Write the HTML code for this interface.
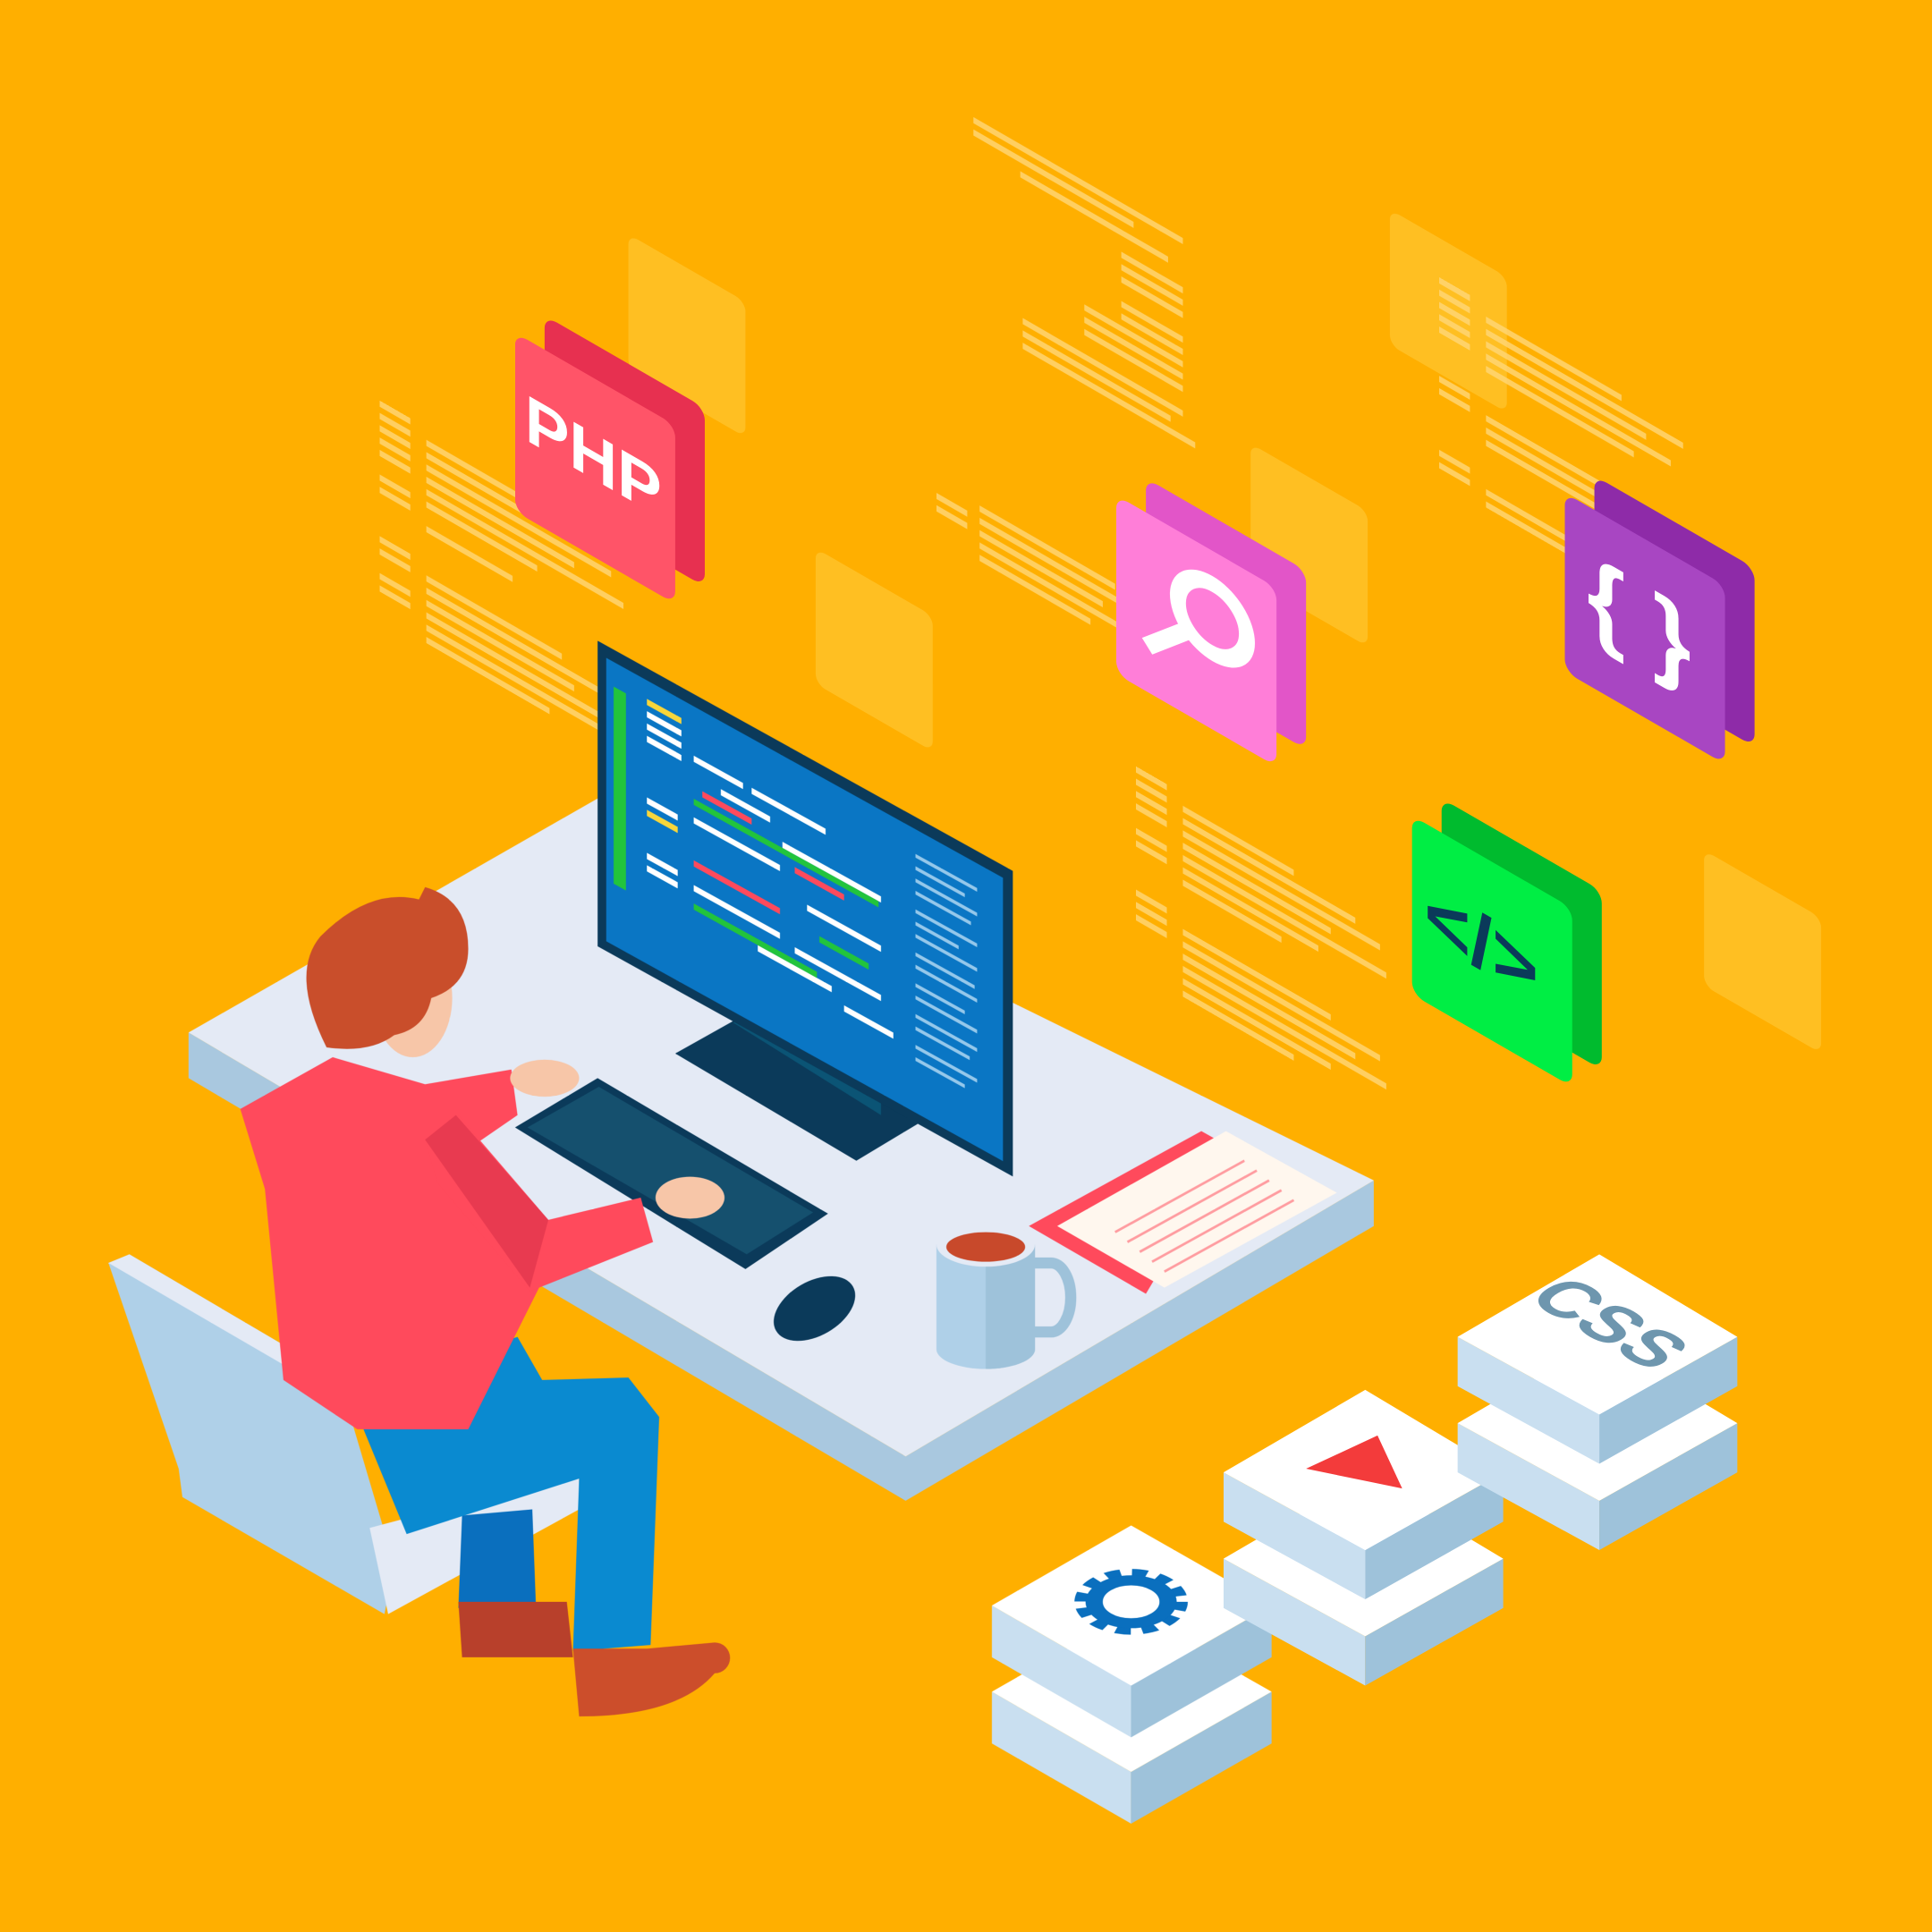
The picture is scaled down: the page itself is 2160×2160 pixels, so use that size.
<!DOCTYPE html>
<html><head><meta charset="utf-8"><style>
html,body{margin:0;padding:0;background:#FFAF00;}
svg{display:block;}
text{font-family:"Liberation Sans",sans-serif;font-weight:bold;}
</style></head><body>
<svg width="2160" height="2160" viewBox="0 0 1568 1568" xmlns="http://www.w3.org/2000/svg">
<rect width="1568" height="1568" fill="#FFAF00"/>

<g fill="#FFC42E" opacity="0.75">
<g transform="translate(510,190) skewY(30)"><rect width="95" height="110" rx="8"/></g>
<g transform="translate(662,445) skewY(30)"><rect width="95" height="110" rx="8"/></g>
<g transform="translate(1015,360) skewY(30)"><rect width="95" height="110" rx="8"/></g>
<g transform="translate(1128,170) skewY(30)"><rect width="95" height="110" rx="8"/></g>
<g transform="translate(1383,690) skewY(30)"><rect width="95" height="110" rx="8"/></g>
</g>

<g fill="#FFD77A" opacity="0.8">
<g transform="translate(308,325) skewY(30)">
<rect y="0" width="25" height="5"/><rect y="10" width="25" height="5"/><rect y="20" width="25" height="5"/><rect y="30" width="25" height="5"/><rect y="40" width="25" height="5"/><rect y="60" width="25" height="5"/><rect y="70" width="25" height="5"/><rect y="110" width="25" height="5"/><rect y="120" width="25" height="5"/><rect y="140" width="25" height="5"/><rect y="150" width="25" height="5"/>
<rect x="38" y="10" width="90" height="5"/><rect x="38" y="20" width="130" height="5"/><rect x="38" y="30" width="150" height="5"/><rect x="38" y="40" width="120" height="5"/><rect x="38" y="50" width="160" height="5"/><rect x="38" y="60" width="90" height="5"/><rect x="38" y="80" width="70" height="5"/><rect x="38" y="120" width="110" height="5"/><rect x="38" y="130" width="150" height="5"/><rect x="38" y="140" width="120" height="5"/><rect x="38" y="150" width="170" height="5"/><rect x="38" y="160" width="140" height="5"/><rect x="38" y="170" width="100" height="5"/>
</g>
<g transform="translate(790,95) skewY(30)">
<rect width="170" height="5"/><rect y="10" width="130" height="5"/><rect x="38" y="22" width="120" height="5"/><rect x="120" y="40" width="50" height="5"/><rect x="120" y="50" width="50" height="5"/><rect x="120" y="60" width="50" height="5"/><rect x="120" y="80" width="50" height="5"/><rect x="120" y="90" width="50" height="5"/><rect x="90" y="100" width="80" height="5"/><rect x="90" y="110" width="80" height="5"/><rect x="90" y="120" width="80" height="5"/><rect x="40" y="140" width="130" height="5"/><rect x="40" y="150" width="120" height="5"/><rect x="40" y="160" width="140" height="5"/>
</g>
<g transform="translate(760,370) skewY(30)">
<rect y="30" width="25" height="5"/><rect y="40" width="25" height="5"/><rect x="35" y="20" width="110" height="5"/><rect x="35" y="30" width="130" height="5"/><rect x="35" y="40" width="100" height="5"/><rect x="35" y="50" width="120" height="5"/><rect x="35" y="60" width="90" height="5"/>
</g>
<g transform="translate(922,622) skewY(30)">
<rect y="0" width="25" height="5"/><rect y="10" width="25" height="5"/><rect y="20" width="25" height="5"/><rect y="30" width="25" height="5"/><rect y="50" width="25" height="5"/><rect y="60" width="25" height="5"/><rect y="100" width="25" height="5"/><rect y="110" width="25" height="5"/><rect y="120" width="25" height="5"/>
<rect x="38" y="10" width="90" height="5"/><rect x="38" y="20" width="140" height="5"/><rect x="38" y="30" width="160" height="5"/><rect x="38" y="40" width="120" height="5"/><rect x="38" y="50" width="165" height="5"/><rect x="38" y="60" width="110" height="5"/><rect x="38" y="70" width="80" height="5"/><rect x="38" y="110" width="120" height="5"/><rect x="38" y="120" width="160" height="5"/><rect x="38" y="130" width="140" height="5"/><rect x="38" y="140" width="165" height="5"/><rect x="38" y="150" width="120" height="5"/><rect x="38" y="160" width="90" height="5"/>
</g>
<g transform="translate(1168,225) skewY(30)">
<rect y="0" width="25" height="5"/><rect y="10" width="25" height="5"/><rect y="20" width="25" height="5"/><rect y="30" width="25" height="5"/><rect y="40" width="25" height="5"/><rect y="80" width="25" height="5"/><rect y="90" width="25" height="5"/><rect y="140" width="25" height="5"/><rect y="150" width="25" height="5"/>
<rect x="38" y="10" width="110" height="5"/><rect x="38" y="20" width="160" height="5"/><rect x="38" y="30" width="130" height="5"/><rect x="38" y="40" width="150" height="5"/><rect x="38" y="50" width="120" height="5"/><rect x="38" y="90" width="150" height="5"/><rect x="38" y="100" width="165" height="5"/><rect x="38" y="110" width="110" height="5"/><rect x="38" y="150" width="120" height="5"/><rect x="38" y="160" width="160" height="5"/>
</g>
</g>

<g transform="translate(442,256) skewY(30)"><rect width="130" height="145" rx="10" fill="#E73050"/></g>
<g transform="translate(418,270) skewY(30)"><rect width="130" height="145" rx="10" fill="#FF5468"/>
<text x="8" y="82" font-size="54" fill="#fff">PHP</text></g>
<g transform="translate(930,388) skewY(30)"><rect width="130" height="145" rx="10" fill="#E255C8"/></g>
<g transform="translate(906,402) skewY(30)"><rect width="130" height="145" rx="10" fill="#FF7ED8"/>
<circle cx="78" cy="55" r="28" fill="none" stroke="#fff" stroke-width="13"/>
<line x1="56" y1="78" x2="25" y2="108" stroke="#fff" stroke-width="12"/></g>
<g transform="translate(1294,386) skewY(30)"><rect width="130" height="145" rx="10" fill="#8E2BA8"/></g>
<g transform="translate(1270,400) skewY(30)"><rect width="130" height="145" rx="10" fill="#A846C2"/>
<text x="18" y="95" font-size="80" fill="#fff">{ }</text></g>
<g transform="translate(1170,648) skewY(30)"><rect width="130" height="145" rx="10" fill="#00BB2E"/></g>
<g transform="translate(1146,662) skewY(30)"><rect width="130" height="145" rx="10" fill="#00EE44"/>
<text x="10" y="92" font-size="64" fill="#0B3A5A">&lt;/&gt;</text></g>

<polygon points="153,838 153,875 735,1218 1115,995 1115,958 735,1182" fill="#A9C8DF"/>
<polygon points="153,838 485,648 1115,958 735,1182" fill="#E4EAF5"/>

<polygon points="548,855 598,827 745,912 695,942" fill="#0B3A5A"/>
<polygon points="595,830 640,805 715,850 715,905" fill="#0B5475"/>
<g transform="translate(485,520) skewY(29)">
<rect width="337" height="248" fill="#0B3A5A"/>
<rect x="7" y="10" width="322" height="230" fill="#0A76C4"/>
<g fill="#22C43C"><rect x="13" y="30" width="10" height="160"/></g>
<g fill="#fff"><rect x="40" y="35" width="28" height="5"/><rect x="40" y="45" width="28" height="5"/><rect x="40" y="55" width="28" height="5"/><rect x="78" y="50" width="40" height="5"/><rect x="40" y="105" width="25" height="5"/><rect x="78" y="100" width="70" height="5"/><rect x="125" y="50" width="60" height="5"/><rect x="100" y="65" width="40" height="5"/><rect x="150" y="80" width="80" height="5"/><rect x="40" y="150" width="25" height="5"/><rect x="40" y="160" width="25" height="5"/><rect x="78" y="155" width="70" height="5"/><rect x="160" y="160" width="70" height="5"/><rect x="130" y="175" width="60" height="5"/><rect x="200" y="185" width="40" height="5"/><rect x="170" y="120" width="60" height="5"/></g>
<g fill="#F8D63A"><rect x="40" y="25" width="28" height="5"/><rect x="40" y="115" width="25" height="5"/></g>
<g fill="#FF4A5C"><rect x="85" y="75" width="40" height="5"/><rect x="160" y="95" width="40" height="5"/><rect x="78" y="135" width="70" height="5"/></g>
<g fill="#22C43C"><rect x="78" y="85" width="150" height="5"/><rect x="78" y="170" width="100" height="5"/><rect x="180" y="140" width="40" height="5"/></g>
<g fill="#B8DDF5" opacity="0.8">
<rect x="258" y="30" width="50" height="3"/><rect x="258" y="40" width="40" height="3"/><rect x="258" y="50" width="50" height="3"/><rect x="258" y="60" width="45" height="3"/><rect x="258" y="75" width="50" height="3"/><rect x="258" y="85" width="35" height="3"/><rect x="258" y="95" width="50" height="3"/><rect x="258" y="110" width="48" height="3"/><rect x="258" y="120" width="50" height="3"/><rect x="258" y="135" width="40" height="3"/><rect x="258" y="145" width="50" height="3"/><rect x="258" y="160" width="50" height="3"/><rect x="258" y="170" width="44" height="3"/><rect x="258" y="185" width="50" height="3"/><rect x="258" y="195" width="40" height="3"/></g>
</g>

<polygon points="418,915 485,875 672,985 605,1030" fill="#0B3A5A"/>
<polygon points="428,915 486,882 660,984 606,1018" fill="#15506E"/>
<ellipse cx="661" cy="1062" rx="36" ry="22" transform="rotate(-30 661 1062)" fill="#0B3A5A"/>
<polygon points="835,995 975,918 1000,932 930,1050" fill="#FF4A5C"/>
<polygon points="858,995 995,918 1085,968 945,1045" fill="#FFF7EE"/>
<g stroke="#FF9CA0" stroke-width="2"><line x1="905" y1="1000" x2="1010" y2="942"/><line x1="915" y1="1008" x2="1020" y2="950"/><line x1="925" y1="1016" x2="1030" y2="958"/><line x1="935" y1="1024" x2="1040" y2="966"/><line x1="945" y1="1032" x2="1050" y2="974"/></g>
<path d="M838,1025 h15 a16,28 0 0 1 0,56 h-15" fill="none" stroke="#9EC2DA" stroke-width="9"/>
<path d="M760,1010 v85 a40,16 0 0 0 80,0 v-85 z" fill="#AFD0E8"/>
<path d="M800,1010 h40 v85 a40,16 0 0 1 -40,16 z" fill="#9EC2DA"/>
<ellipse cx="800" cy="1010" rx="40" ry="18" fill="#E4EAF5"/>
<ellipse cx="800" cy="1012" rx="32" ry="12" fill="#C8492B"/>

<polygon points="88,1025 105,1018 275,1118 320,1270 312,1310 148,1215 145,1192" fill="#AFD0E8"/>
<polygon points="88,1025 105,1018 275,1118 260,1125" fill="#E4EAF5"/>
<polygon points="300,1240 470,1195 470,1225 315,1310" fill="#E4EAF5"/>
<polygon points="375,1230 432,1225 435,1305 372,1305" fill="#0A6FBE"/>
<polygon points="372,1300 460,1300 465,1345 375,1345" fill="#B8402B"/>
<polygon points="295,1160 370,1100 420,1085 440,1120 510,1118 535,1150 528,1335 465,1340 470,1200 330,1245" fill="#0A8AD0"/>
<path d="M465,1338 h60 l55,-5 a10,10 0 0 1 0,25 q-30,35 -110,35 z" fill="#CC4E2B"/>
<polygon points="195,900 270,858 345,880 415,868 420,905 372,938 440,1040 380,1160 290,1160 230,1120 215,965" fill="#FF4A5C"/>
<polygon points="345,925 372,905 445,990 520,972 530,1008 430,1048 355,960" fill="#FF4A5C"/>
<path d="M345,925 l25,-20 l75,85 l-15,55 z" fill="#E83A50"/>
<ellipse cx="442" cy="875" rx="28" ry="15" fill="#F7C6A8"/>
<ellipse cx="560" cy="972" rx="28" ry="17" fill="#F7C6A8"/>
<ellipse cx="335" cy="810" rx="32" ry="48" fill="#F7C6A8"/>
<path d="M265,850 q-30,-60 -5,-90 q40,-40 80,-30 l5,-10 q35,10 35,50 q0,30 -30,40 q-5,25 -30,30 q-20,15 -55,10 z" fill="#C94E2B"/>

<g>
<polygon points="805,1373 918,1438 918,1480 805,1415" fill="#C9DFF0"/><polygon points="918,1438 1032,1373 1032,1415 918,1480" fill="#9EC2DA"/>
<polygon points="805,1373 918,1308 1032,1373 918,1438" fill="#fff"/>
<polygon points="805,1303 918,1368 918,1410 805,1345" fill="#C9DFF0"/><polygon points="918,1368 1032,1303 1032,1345 918,1410" fill="#9EC2DA"/>
<polygon points="805,1303 918,1238 1032,1303 918,1368" fill="#fff"/>
<g transform="translate(918,1300) scale(1,0.58)"><circle r="40" fill="none" stroke="#0A6FBE" stroke-width="12" stroke-dasharray="12 9"/><circle r="30" fill="none" stroke="#0A6FBE" stroke-width="14"/></g>
<polygon points="993,1265 1108,1328 1108,1368 993,1305" fill="#C9DFF0"/><polygon points="1108,1328 1220,1265 1220,1305 1108,1368" fill="#9EC2DA"/>
<polygon points="993,1265 1108,1198 1220,1265 1108,1328" fill="#fff"/>
<polygon points="993,1195 1108,1258 1108,1298 993,1235" fill="#C9DFF0"/><polygon points="1108,1258 1220,1195 1220,1235 1108,1298" fill="#9EC2DA"/>
<polygon points="993,1195 1108,1128 1220,1195 1108,1258" fill="#fff"/>
<polygon points="1060,1192 1118,1165 1138,1208" fill="#F33B3B"/>
<polygon points="1183,1155 1298,1218 1298,1258 1183,1195" fill="#C9DFF0"/><polygon points="1298,1218 1410,1155 1410,1195 1298,1258" fill="#9EC2DA"/>
<polygon points="1183,1155 1298,1088 1410,1155 1298,1218" fill="#fff"/>
<polygon points="1183,1085 1298,1148 1298,1188 1183,1125" fill="#C9DFF0"/><polygon points="1298,1148 1410,1085 1410,1125 1298,1188" fill="#9EC2DA"/>
<polygon points="1183,1085 1298,1018 1410,1085 1298,1148" fill="#fff"/>
<g transform="matrix(0.866,0.5,-0.866,0.5,1262,1040)"><text x="0" y="28" font-size="58" fill="#6E96AE">CSS</text></g>
</g>
</svg>
</body></html>
